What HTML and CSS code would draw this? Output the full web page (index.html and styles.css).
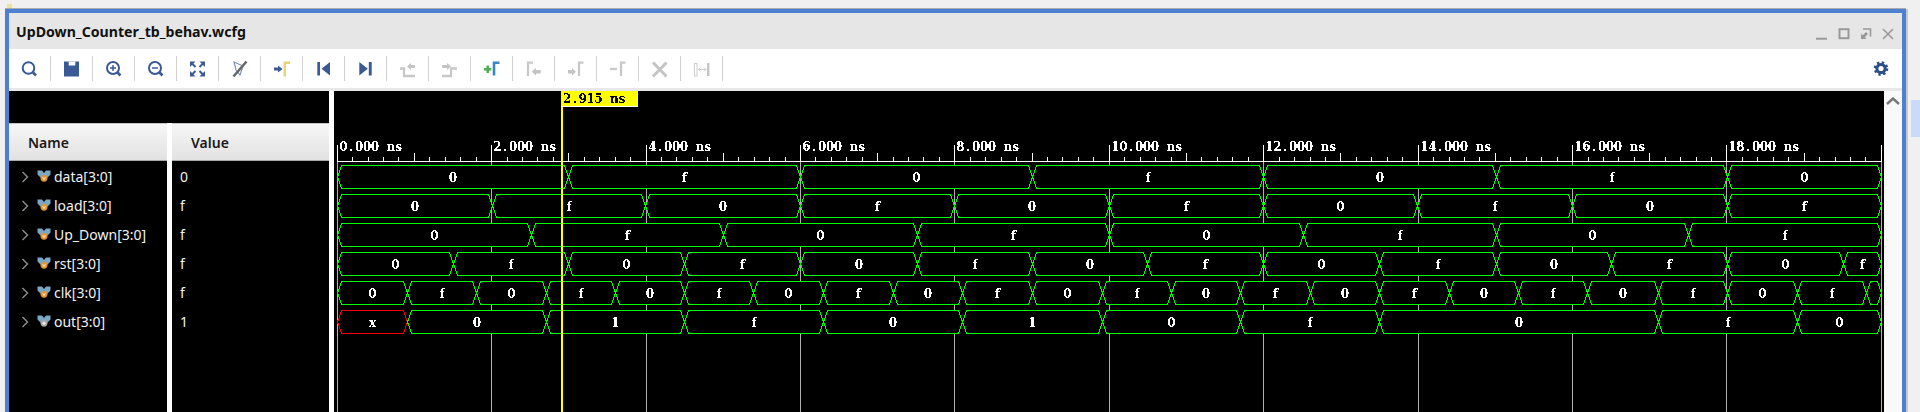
FILE: index.html
```html
<!DOCTYPE html>
<html lang="en">
  <head>
    <meta charset="UTF-8" />
    <title>UpDown_Counter_tb_behav.wcfg</title>
    <link rel="stylesheet" href="styles.css">
  </head>
  <body>
    <span class="corner"></span>

    <svg class="defs" width="0" height="0">
      <symbol id="chev" viewBox="0 0 8 12">
        <path d="M1.5 1 L6.5 6 L1.5 11" fill="none" stroke="#8a8a8a" stroke-width="1.5" />
      </symbol>
      <symbol id="sigIn" viewBox="0 0 14 13">
        <path d="M0.5 0.5 H5 L7 3 L9 0.5 H13.5 V4.5 L10 8 H4 L0.5 4.5 Z" fill="#7ba6c4" />
        <circle cx="7" cy="8.3" r="3.4" fill="#e8952e" />
        <path d="M5.7 7.2 L7 9.6 L8.3 7.2" fill="none" stroke="#fff" stroke-width="0.8" />
      </symbol>
      <symbol id="sigOut" viewBox="0 0 14 13">
        <path d="M0.5 0.5 H5 L7 3 L9 0.5 H13.5 V4.5 L10 8 H4 L0.5 4.5 Z" fill="#7ba6c4" />
        <circle cx="7" cy="8.3" r="3.4" fill="#a8a8a8" />
        <circle cx="7" cy="8.3" r="1.5" fill="#eee" />
      </symbol>
    </svg>

    <div class="window">
      <div class="titlebar">
        <span class="title">UpDown_Counter_tb_behav.wcfg</span>
        <div class="win-btns">
          <svg viewBox="0 0 12 12"><path d="M0 10.7 H11" stroke="#999" stroke-width="2" /></svg>
          <svg viewBox="0 0 12 12"><rect x="1.5" y="1.2" width="9" height="9" fill="none" stroke="#999" stroke-width="2" /></svg>
          <svg viewBox="0 0 12 12"><path d="M3 1 H10.5 V8.5" fill="none" stroke="#999" stroke-width="1.6" /><path d="M1 11 V5.5 L2.8 7.2 L6 4 L8 6 L4.8 9.2 L6.5 11 Z" fill="#999" /></svg>
          <svg viewBox="0 0 12 12"><path d="M1 1 L11 11 M11 1 L1 11" stroke="#999" stroke-width="1.6" /></svg>
        </div>
      </div>

      <div class="toolbar">
        <div class="tool"><svg viewBox="0 0 24 24"><circle cx="10.5" cy="11" r="5.8" class="ln" /><path d="M15 15.5 L18 18.5" class="ln thick" /></svg></div>
        <div class="tool"><svg viewBox="0 0 24 24"><path d="M4 4.5 H19 V19.5 H4 Z" class="fl" /><rect x="8.7" y="4.5" width="6.6" height="4" fill="#fff" /></svg></div>
        <div class="tool"><svg viewBox="0 0 24 24"><circle cx="11" cy="11" r="6" class="ln" /><path d="M8 11 H14 M11 8 V14" class="ln thin" /><path d="M15.5 15.5 L18.5 18.5" class="ln thick" /></svg></div>
        <div class="tool"><svg viewBox="0 0 24 24"><circle cx="11" cy="11" r="6" class="ln" /><path d="M8 11 H14" class="ln thin" /><path d="M15.5 15.5 L18.5 18.5" class="ln thick" /></svg></div>
        <div class="tool"><svg viewBox="0 0 24 24"><g id="fitArrow"><path d="M4 4.5 H9.5 L4 10 Z" class="fl" /><path d="M6 6.5 L9.5 10" class="ln" /></g><use href="#fitArrow" transform="translate(23 0) scale(-1 1)" /><use href="#fitArrow" transform="translate(0 24) scale(1 -1)" /><use href="#fitArrow" transform="translate(23 24) scale(-1 -1)" /></svg></div>
        <div class="tool"><svg viewBox="0 0 24 24"><path d="M6 5 L15 9 L12 18 L8 13 Z" fill="none" stroke="#7d94ba" stroke-width="1.2" /><path d="M5.5 19.5 L18.5 4.5" stroke="#666" stroke-width="2.5" /></svg></div>
        <div class="tool"><svg viewBox="0 0 24 24"><path d="M4 10.5 H8 V8.5 L12.5 12 L8 15.5 V13.5 H4 Z" class="fl" /><path d="M14.8 19.5 V5.7 H20" fill="none" stroke="#e6d574" stroke-width="2.5" /></svg></div>
        <div class="tool"><svg viewBox="0 0 24 24"><rect x="5.3" y="5" width="2.7" height="13.5" class="fl" /><path d="M18 5 V18.5 L9.5 11.75 Z" class="fl" /></svg></div>
        <div class="tool"><svg viewBox="0 0 24 24"><path d="M5.3 5 V18.5 L13.8 11.75 Z" class="fl" /><rect x="14.8" y="5" width="2.9" height="13.5" class="fl" /></svg></div>
        <div class="tool"><svg viewBox="0 0 24 24"><path d="M4 11.5 H8 V19 H19" class="off" /><path d="M15 6 V8 H19 V11 H15 V13 L11 9.5 Z" class="off-fl" /></svg></div>
        <div class="tool"><svg viewBox="0 0 24 24"><path d="M4 19 H13 V11.5 H19" class="off" /><path d="M9 6 V8 H4 V11 H9 V13 L13 9.5 Z" class="off-fl" /></svg></div>
        <div class="tool"><svg viewBox="0 0 24 24"><path d="M4 12.3 H11.3 M7.7 8.6 V16" stroke="#4caf50" stroke-width="2.5" /><path d="M14 18.5 V5.7 H19.5" fill="none" stroke="#3b87c4" stroke-width="2.6" /></svg></div>
        <div class="tool"><svg viewBox="0 0 24 24"><path d="M6 19 V5.6 H11" class="off" /><path d="M9.7 14.7 L14 11 V13 H18.7 V16.5 H14 V18.5 Z" class="off-fl" /></svg></div>
        <div class="tool"><svg viewBox="0 0 24 24"><path d="M15 19 V5.6 H19.5" class="off" /><path d="M4 13 H8 V11 L12 14.7 L8 18.5 V16.5 H4 Z" class="off-fl" /></svg></div>
        <div class="tool"><svg viewBox="0 0 24 24"><path d="M4 12 H11" class="off" /><path d="M15 19 V5.6 H19.5" class="off" /></svg></div>
        <div class="tool"><svg viewBox="0 0 24 24"><path d="M5 5.5 L18.5 19.5 M18.5 5.5 L5 19.5" stroke="#c4c4c4" stroke-width="3" /></svg></div>
        <div class="tool"><svg viewBox="0 0 24 24"><rect x="4.5" y="6.5" width="2.5" height="12.5" fill="none" stroke="#ccc" /><rect x="17" y="6" width="2.4" height="13" fill="#c4c4c4" /><path d="M8.5 12.5 H16 M10.5 10.5 L8.5 12.5 L10.5 14.5 M14 10.5 L16 12.5 L14 14.5" fill="none" stroke="#ccc" /></svg></div>
        <div class="gear"><svg viewBox="0 0 24 24"><circle cx="12" cy="11.5" r="6" fill="none" stroke="#2b4d8c" stroke-width="2.6" stroke-dasharray="2.35 2.36" /><circle cx="12" cy="11.5" r="5.6" fill="#2b4d8c" /><circle cx="12" cy="11.5" r="2.6" fill="#fff" /></svg></div>
      </div>

      <div class="panes">
        <div class="signals">
          <div class="blank"></div>
          <div class="heads">
            <div class="head head-name">Name</div>
            <div class="head head-value">Value</div>
          </div>
          <div class="lists">
            <ul class="names">
              <li><svg class="chev"><use href="#chev" /></svg><svg class="sig"><use href="#sigIn" /></svg>data[3:0]</li>
              <li><svg class="chev"><use href="#chev" /></svg><svg class="sig"><use href="#sigIn" /></svg>load[3:0]</li>
              <li><svg class="chev"><use href="#chev" /></svg><svg class="sig"><use href="#sigIn" /></svg>Up_Down[3:0]</li>
              <li><svg class="chev"><use href="#chev" /></svg><svg class="sig"><use href="#sigIn" /></svg>rst[3:0]</li>
              <li><svg class="chev"><use href="#chev" /></svg><svg class="sig"><use href="#sigIn" /></svg>clk[3:0]</li>
              <li><svg class="chev"><use href="#chev" /></svg><svg class="sig"><use href="#sigOut" /></svg>out[3:0]</li>
            </ul>
            <ul class="values">
              <li>0</li>
              <li>f</li>
              <li>f</li>
              <li>f</li>
              <li>f</li>
              <li>1</li>
            </ul>
          </div>
        </div>

        <svg id="wave" class="wave" viewBox="334 91 1550 321" width="1550" height="321">
          <filter id="crisp">
            <feComponentTransfer color-interpolation-filters="sRGB">
              <feFuncA type="discrete" tableValues="0 1" />
            </feComponentTransfer>
          </filter>
        </svg>

        <div class="vscroll">
          <svg viewBox="0 0 14 8"><path d="M1 7 L7 1.5 L13 7" fill="none" stroke="#777" stroke-width="2.4" /></svg>
        </div>
      </div>
    </div>

    <div class="side">
      <div class="side-blue"></div>
    </div>

    <script src="wave.js"></script>
  </body>
</html>
```

FILE: styles.css
```css
body {
  margin: 0;
  height: 412px;
  overflow: hidden;
  display: flex;
  align-items: flex-start;
  background-color: #f0f0f0;
  font-family: "Noto Sans", sans-serif;
}
ul {
  margin: 0;
  padding: 0;
  list-style: none;
}
.defs {
  position: absolute;
}
.corner {
  position: absolute;
  left: 7px;
  top: 4px;
  width: 5px;
  height: 4px;
  background: #e8e29a;
}
.window {
  flex: none;
  width: 1893px;
  height: 399px;
  margin: 9px 0 0 5px;
  border: 4px solid #4d80d0;
  border-bottom: none;
  background: #e8e8e8;
  box-shadow: 0 -1px 0 #aaa, 2px 0 0 #c8c8c8;
}
.side {
  flex: 1;
  height: 412px;
  margin-left: 5px;
  padding-top: 100px;
  box-sizing: border-box;
}
.side-blue {
  height: 37px;
  background: #c9dbf9;
}

/* title */
.titlebar {
  height: 36px;
  display: flex;
  align-items: center;
  justify-content: space-between;
  padding: 0 8px 0 7px;
  background: #e6e6e6;
}
.title {
  font-size: 14.15px;
  font-weight: 700;
  color: #111;
}
.win-btns {
  display: flex;
  gap: 10px;
  margin-top: 5px;
}
.win-btns svg {
  width: 12px;
  height: 12px;
}

/* toolbar */
.toolbar {
  height: 39px;
  display: flex;
  align-items: center;
  padding-right: 9px;
  background: #fff;
}
.tool {
  width: 41px;
  height: 25px;
  border-right: 1px solid #d2d2d2;
  display: flex;
  align-items: center;
  justify-content: center;
}
.tool svg,
.gear svg {
  width: 24px;
  height: 24px;
  display: block;
}
.gear {
  margin-left: auto;
}
.ln {
  fill: none;
  stroke: #3a5a96;
  stroke-width: 2;
}
.ln.thin {
  stroke-width: 1.5;
}
.ln.thick {
  stroke-width: 2.6;
}
.fl {
  fill: #3a5a96;
}
.off {
  fill: none;
  stroke: #c8c8c8;
  stroke-width: 2.3;
}
.off-fl {
  fill: #c4c4c4;
}

/* panes */
.panes {
  margin-top: 3px;
  height: 321px;
  display: flex;
  background: #fff;
}
.signals {
  width: 320px;
  flex: none;
  margin-right: 5px;
}
.blank {
  height: 32px;
  background: #000;
}
.heads {
  display: flex;
  gap: 5px;
  height: 38px;
}
.head {
  box-sizing: border-box;
  font-size: 14px;
  font-weight: 600;
  color: #1a1a1a;
  line-height: 37px;
  border-top: 1px solid #c4c4c4;
  border-bottom: 1px solid #a8a8a8;
  background: linear-gradient(#f6f6f6, #e2e2e2);
}
.head-name {
  width: 158px;
  padding-left: 19px;
}
.head-value {
  width: 157px;
  padding-left: 19px;
}
.lists {
  display: flex;
  gap: 5px;
  height: 251px;
}
.names,
.values {
  background: #000;
  color: #f2f2f2;
  font-size: 14px;
  padding-top: 1px;
}
.names {
  width: 158px;
}
.values {
  width: 157px;
  box-sizing: border-box;
  padding-left: 8px;
}
.names li,
.values li {
  height: 29px;
  line-height: 29px;
  display: flex;
  align-items: center;
}
.chev {
  width: 8px;
  height: 12px;
  margin-left: 12px;
  margin-right: 8px;
}
.sig {
  width: 14px;
  height: 13px;
  margin-right: 3px;
}
.wave {
  display: block;
  flex: none;
  background: #000;
}
.vscroll {
  flex: 1;
  background: #f9f9f9;
  display: flex;
  justify-content: center;
  padding-top: 6px;
  align-items: flex-start;
}
.vscroll svg {
  width: 14px;
  height: 8px;
}
```

FILE: wave.js
```js
const NS = "http://www.w3.org/2000/svg";
const svg = document.getElementById("wave");

const X0 = 337.2;
const MAJOR = 154.42;
const END = 1881;
const CELL = 7.9;
const FONTE = {
  filter: "url(#crisp)",
  "font-family": "'DejaVu Serif', serif",
  "font-weight": "700",
  "font-size": "12",
  "text-anchor": "middle",
};

// transition points read per signal, first value comes before the first point
const sinais = [
  { vals: "0f", t: [568, 800, 1032, 1263, 1496, 1727] },
  { vals: "0f", t: [492, 645, 800, 954, 1109, 1263, 1417, 1572, 1727] },
  { vals: "0f", t: [531, 723, 917, 1109, 1303, 1496, 1688] },
  { vals: "0f", t: [453, 568, 684, 800, 917, 1032, 1147, 1263, 1379, 1496, 1611, 1727, 1843] },
  { vals: "0f", t: [407, 476, 546, 615, 684, 753, 823, 893, 962, 1032, 1102, 1171, 1240, 1310, 1379, 1449, 1518, 1587, 1658, 1727, 1797, 1866] },
  { seq: "x01f010f0f0", t: [407, 546, 684, 823, 962, 1102, 1240, 1379, 1658, 1797] },
];

function add(parent, tag, attrs, text) {
  const el = document.createElementNS(NS, tag);
  for (const k in attrs) el.setAttribute(k, attrs[k]);
  if (text) el.textContent = text;
  parent.appendChild(el);
  return el;
}

function celulas(x, str) {
  return Array.from(str, (c, i) => x + CELL * (i + 0.5)).join(" ");
}

const linhas = add(svg, "g", { "shape-rendering": "crispEdges" });
const textos = add(svg, "g", FONTE);

// grid and ruler
for (let i = 0; i <= 10; i++) {
  const x = Math.floor(X0 + MAJOR * i) + 0.5;
  add(linhas, "path", { d: `M${x} 145V412`, stroke: "#b0b0b0", fill: "none" });
  add(linhas, "path", { d: `M${x} 145V161`, stroke: "#fff", fill: "none" });
  if (i < 10) {
    const rotulo = `${i * 2}.000 ns`;
    add(textos, "text", { x: celulas(x + 2, rotulo), y: 151, fill: "#fff" }, rotulo);
    for (let j = 1; j < 10; j++) {
      const tx = Math.floor(X0 + (MAJOR * (i + j / 10))) + 0.5;
      const top = j === 5 ? 153 : 157;
      add(linhas, "path", { d: `M${tx} ${top}V161`, stroke: "#fff", fill: "none" });
    }
  }
}
add(linhas, "path", { d: `M337 161.5H1882`, stroke: "#fff", fill: "none" });

// signal rows
sinais.forEach((s, r) => {
  const top = 165.5 + 29 * r;
  const bot = top + 23;
  const mid = top + 11.5;
  const pts = [337.5, ...s.t.map((v) => v + 0.5), END + 0.5];
  for (let i = 0; i < pts.length - 1; i++) {
    const a = pts[i];
    const b = pts[i + 1];
    const val = s.seq ? s.seq[i] : s.vals[i % 2];
    const cor = val === "x" ? "#ff0000" : "#00ff00";
    add(linhas, "polygon", {
      points: `${a},${mid} ${a + 4},${top} ${b - 4},${top} ${b},${mid} ${b - 4},${bot} ${a + 4},${bot}`,
      fill: "#000",
      stroke: cor,
    });
    if (b - a > 30) {
      add(textos, "text", { x: (a + b) / 2, y: mid + 4.5, fill: "#fff" }, val);
    }
  }
});

// cursor goes on top of everything
const cursor = add(svg, "g", {});
add(cursor, "rect", { x: 561, y: 91, width: 2, height: 321, fill: "#ffff00" });
add(cursor, "rect", { x: 561, y: 91, width: 77, height: 16, fill: "#fff" });
add(cursor, "rect", { x: 561, y: 91, width: 76, height: 15, fill: "#ffff00" });
add(cursor, "text", { ...FONTE, x: celulas(563, "2.915 ns"), y: 103, fill: "#000" }, "2.915 ns");
```
